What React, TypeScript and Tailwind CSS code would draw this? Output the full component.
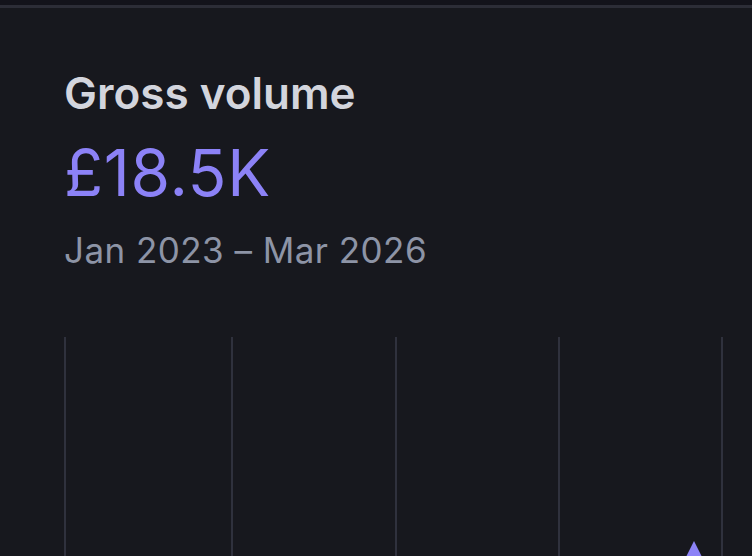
export default function App() {
  const lines = [65, 232, 396, 559, 722]

  return (
    <div
      className="h-[556px] w-[752px] overflow-hidden bg-[#17181e]"
      style={{ fontFamily: 'Inter, "Noto Sans", sans-serif' }}
    >
      <div className="h-[5px] bg-[#13131b]" />
      <div className="h-[3px] bg-[#2c2d37]" />

      <div className="pl-16 pt-[59px]">
        <h2 className="text-[44px] font-semibold leading-[52px] text-[#d3d5dd]">
          Gross volume
        </h2>
        <p className="mt-[18px] text-[64px] font-normal leading-[72px] tracking-[0.7px] text-[#8c82f7]">
          £18.5K
        </p>
        <p className="mt-[19px] text-[35px] leading-[44px] tracking-[0.45px] text-[#8d94a6]">
          Jan 2023 – Mar 2026
        </p>
      </div>

      <svg className="mt-[65px] block" width="752" height="240" viewBox="0 0 752 240">
        {lines.map((x) => (
          <rect key={x} x={x - 1} y={0} width={2} height={240} fill="#2f313d" />
        ))}
        <path d="M676 240 L694 204 L712 240 Z" fill="#8c82f7" />
      </svg>
    </div>
  )
}
